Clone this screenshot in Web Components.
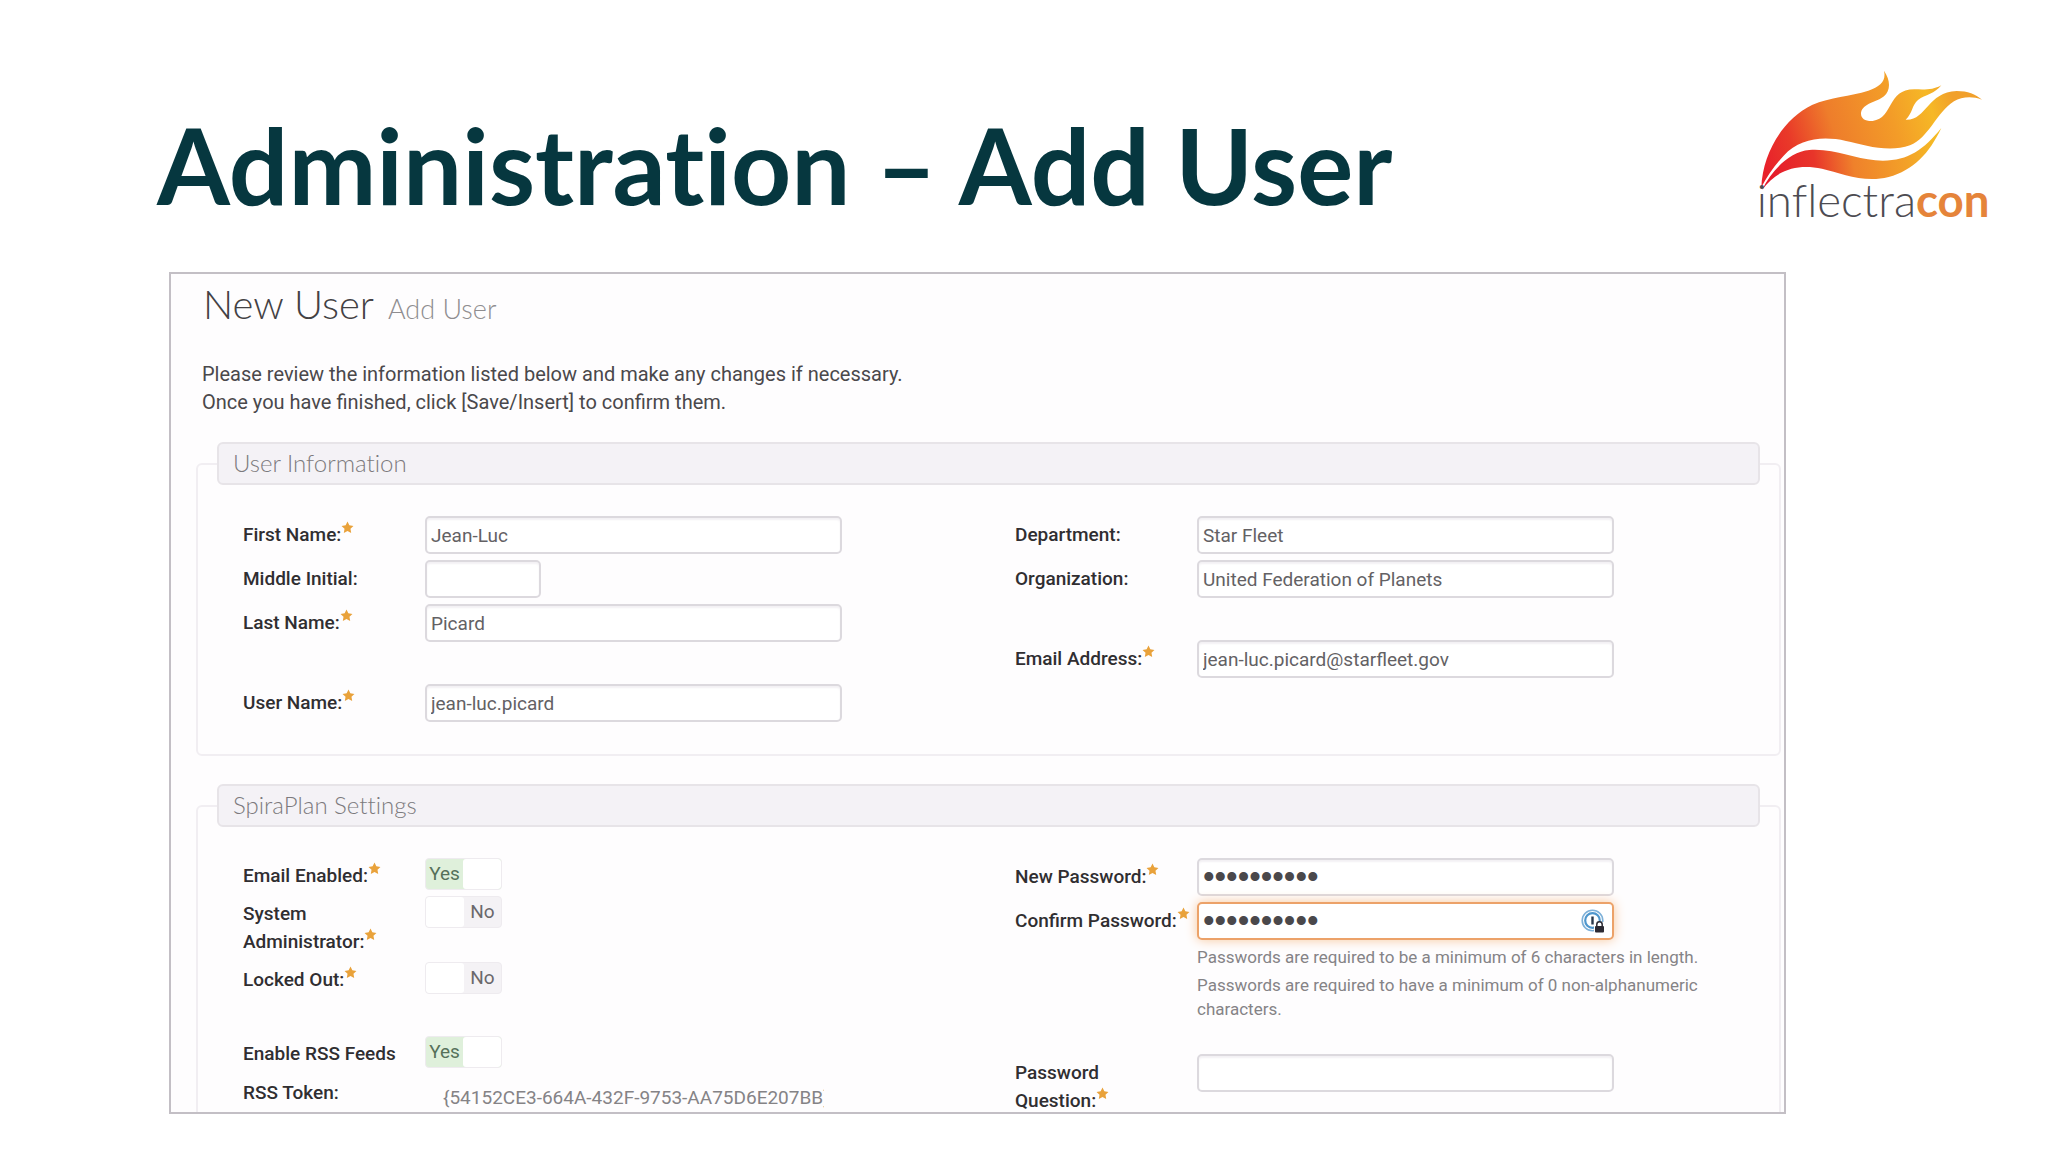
<!DOCTYPE html>
<html lang="en">
<head>
<meta charset="utf-8">
<title>Administration – Add User</title>
<style>
  html, body { margin: 0; height: 100%; background: #fff; }
  body { font-family: Roboto, "Liberation Sans", sans-serif; font-size: 19px; line-height: 28px; color: #4a484b; }
  [slot=help] p { margin: 4px 0 0; }
</style>
</head>
<body>
<training-slide>
  <h1 slot="title">Administration – Add User</h1>
  <brand-logo slot="logo"></brand-logo>
  <admin-panel heading="New User" subheading="Add User">
    <p slot="intro">Please review the information listed below and make any changes if necessary.<br>Once you have finished, click [Save/Insert] to confirm them.</p>
    <form-section legend="User Information">
      <form-column>
        <text-field label="First Name:" required value="Jean-Luc"></text-field>
        <text-field label="Middle Initial:" short></text-field>
        <text-field label="Last Name:" required value="Picard"></text-field>
        <text-field label="User Name:" required value="jean-luc.picard" spaced></text-field>
      </form-column>
      <form-column>
        <text-field label="Department:" value="Star Fleet"></text-field>
        <text-field label="Organization:" value="United Federation of Planets"></text-field>
        <text-field label="Email Address:" required type="email" value="jean-luc.picard@starfleet.gov" spaced></text-field>
      </form-column>
    </form-section>
    <form-section legend="SpiraPlan Settings">
      <form-column>
        <switch-field label="Email Enabled:" required on></switch-field>
        <switch-field label="System Administrator:" required></switch-field>
        <switch-field label="Locked Out:" required></switch-field>
        <switch-field label="Enable RSS Feeds" on spaced></switch-field>
        <text-field label="RSS Token:" plain value="{54152CE3-664A-432F-9753-AA75D6E207BB}"></text-field>
      </form-column>
      <form-column>
        <text-field label="New Password:" required type="password" value="enterprise"></text-field>
        <text-field label="Confirm Password:" required type="password" value="enterprise" active>
          <key-icon slot="icon"></key-icon>
          <div slot="help">
            <p>Passwords are required to be a minimum of 6 characters in length.</p>
            <p>Passwords are required to have a minimum of 0 non-alphanumeric characters.</p>
          </div>
        </text-field>
        <text-field label="Password Question:" required spaced="tight"></text-field>
      </form-column>
    </form-section>
  </admin-panel>
</training-slide>

<script>
const STAR = `<svg class="star" viewBox="0 0 24 24" aria-hidden="true"><path d="M12 1l3.4 6.900 7.600 1.100-5.500 5.400 1.300 7.600-6.800-3.600-6.800 3.600 1.300-7.600L1 9l7.600-1.100z" fill="#e9a23b"/></svg>`;

const FIELD_CSS = `
  :host { display: grid; grid-template-columns: 182px minmax(0, 1fr); align-items: start; }
  :host([spaced]) { margin-top: 36px; }
  :host([spaced=tight]) { margin-top: 27px; }
  .name { display: block; padding-top: 4px; font-weight: 500; color: #302e31; }
  .nobr { white-space: nowrap; }
  .star { width: 13px; height: 13px; vertical-align: top; }
`;

/* Keeps the marker on the same line as the last word of the label. */
function labelHtml(el) {
  const words = el.getAttribute('label').split(' ');
  const last = words.pop();
  const lead = words.length ? words.join(' ') + ' ' : '';
  return lead + `<span class="nobr">${last}${el.hasAttribute('required') ? STAR : ''}</span>`;
}

function define(name, render) {
  customElements.define(name, class extends HTMLElement {
    connectedCallback() {
      if (this.shadowRoot) return;
      this.attachShadow({ mode: 'open' }).innerHTML = render(this);
    }
  });
}

define('training-slide', () => `
  <style>
    :host { display: flex; flex-direction: column; box-sizing: border-box; height: 100vh; padding: 50px 38px 38px; }
    header { display: flex; justify-content: space-between; align-items: flex-start; height: 222px; flex: none; padding-left: 119px; }
    ::slotted(h1) { margin: 49px 0 0; font: 700 105px/130px Lato, sans-serif; font-variant-ligatures: none; color: #06373f; white-space: nowrap; }
    main { flex: 1; min-height: 0; display: flex; margin: 0 224px 0 131px; }
  </style>
  <header><slot name="title"></slot><slot name="logo"></slot></header>
  <main><slot></slot></main>`);

define('brand-logo', () => `
  <style>
    :host { display: block; flex: none; }
    svg { display: block; width: 270px; height: 190px; }
    text { font-family: Lato, sans-serif; font-size: 137px; font-weight: 300; font-variant-ligatures: none; fill: #4d4c52; }
    .con { font-weight: 700; fill: #e5843a; }
  </style>
  <svg viewBox="0 0 810 570" role="img" aria-label="inflectracon">
    <defs>
      <linearGradient id="f" gradientUnits="userSpaceOnUse" x1="70" y1="330" x2="640" y2="150">
        <stop offset="0" stop-color="#e8212b"/><stop offset=".16" stop-color="#e93a29"/>
        <stop offset=".38" stop-color="#ee7d2b"/><stop offset=".68" stop-color="#f39c28"/>
        <stop offset=".88" stop-color="#f6b826"/><stop offset="1" stop-color="#f1a02b"/>
      </linearGradient>
      <linearGradient id="g" gradientUnits="userSpaceOnUse" x1="80" y1="370" x2="600" y2="300">
        <stop offset="0" stop-color="#e5192b"/><stop offset=".28" stop-color="#e8352a"/>
        <stop offset=".5" stop-color="#ef812b"/><stop offset=".8" stop-color="#f3a128"/><stop offset="1" stop-color="#f5bd25"/>
      </linearGradient>
    </defs>
    <path fill="url(#f)" d="M64 412C68 310 128 208 216 165C272 140 330 140 385 122C422 110 439 92 432 62C452 92 452 120 432 139C410 158 370 158 363 188C362 207 376 214 398 213C462 204 440 118 523 118C555 119 580 120 604 106C585 131 556 134 534 150C516 164 518 190 497 209C560 212 562 126 650 123C684 123 706 132 726 149C694 137 665 141 642 154C590 186 566 265 510 286C446 309 372 285 318 273C250 258 180 264 131 317C104 347 82 378 64 412Z"/>
    <path fill="url(#g)" d="M66 420C97 358 150 305 208 300C286 295 340 326 406 331C496 338 546 305 604 234C568 310 520 361 446 381C370 400 304 369 246 356C176 341 112 356 66 420Z"/>
    <text x="50" y="500">inflectra<tspan class="con">con</tspan></text>
  </svg>`);

define('admin-panel', el => `
  <style>
    :host { display: block; flex: 1; min-width: 0; box-sizing: border-box; overflow: hidden; border: 2px solid #c3bfc5; background: #fefdfe; padding: 5px 3px 0 25px; }
    h2 { margin: 0 0 0 7px; font: 300 40px/50px Lato, sans-serif; color: #434144; }
    small { margin-left: 4px; font-size: 27px; color: #8f8d90; }
    .intro { margin: 26px 0 0 6px; }
    ::slotted(p) { margin: 0; font-size: 20px; }
    .body { display: flex; flex-direction: column; gap: 28px; margin-top: 26px; }
  </style>
  <h2>${el.getAttribute('heading')} <small>${el.getAttribute('subheading')}</small></h2>
  <div class="intro"><slot name="intro"></slot></div>
  <div class="body"><slot></slot></div>`);

define('form-section', el => `
  <style>
    :host { display: block; }
    fieldset { margin: 0; min-width: 0; border: 2px solid #f1eef2; border-radius: 6px; padding: 31px 19px 32px; }
    legend { box-sizing: border-box; width: 100%; height: 43px; padding: 0 14px; border: 2px solid #e7e4e8; border-radius: 6px; background: #f4f2f6; font: 300 24px/37px Lato, sans-serif; font-variant-ligatures: none; color: #7c7a7d; }
    .columns { display: grid; grid-template-columns: 1fr 1fr; column-gap: 8px; padding-left: 26px; margin-right: -19px; }
  </style>
  <fieldset>
    <legend>${el.getAttribute('legend')}</legend>
    <div class="columns"><slot></slot></div>
  </fieldset>`);

define('form-column', () => `
  <style>:host { display: flex; flex-direction: column; gap: 6px; min-width: 0; }</style>
  <slot></slot>`);

define('text-field', el => `
  <style>
    ${FIELD_CSS}
    .name { padding-top: 5px; }
    .box { position: relative; max-width: 417px; }
    input { display: block; box-sizing: border-box; width: 100%; height: 38px; margin: 0; padding: 0 4px; border: 2px solid #dcd9de; border-radius: 5px; background: #fff; font: inherit; color: #636164; outline: none; box-shadow: inset 0 2px 2px #f3f1f4; }
    input[type=password] { font-family: "Liberation Sans", sans-serif; font-size: 33px; color: #4a484b; }
    :host([short]) .box { max-width: 116px; }
    :host([active]) input { border-color: #eca269; box-shadow: 0 0 12px #f8c79c; }
    :host([plain]) .box { max-width: 401px; }
    :host([plain]) input { height: 46px; padding: 0 0 0 16px; border-color: transparent; background: none; box-shadow: none; color: #858386; }
    ::slotted([slot=icon]) { position: absolute; right: 9px; top: 7px; }
    .help { max-width: 520px; padding-top: 1px; font-size: 17px; line-height: 24px; color: #858386; }
  </style>
  <label class="name" for="field">${labelHtml(el)}</label>
  <div>
    <div class="box">
      <input id="field" type="${el.getAttribute('type') || 'text'}" value="${el.getAttribute('value') || ''}">
      <slot name="icon"></slot>
    </div>
    ${el.querySelector('[slot=help]') ? '<div class="help"><slot name="help"></slot></div>' : ''}
  </div>`);

define('switch-field', el => {
  const on = el.hasAttribute('on');
  const knob = `<input id="field" type="checkbox" role="switch"${on ? ' checked' : ''}>`;
  const text = `<span>${on ? 'Yes' : 'No'}</span>`;
  return `
  <style>
    ${FIELD_CSS}
    .switch { display: flex; box-sizing: border-box; width: 77px; height: 32px; border: 1px solid #eeebef; border-radius: 4px; overflow: hidden; background: #f4f2f5; color: #6a686b; }
    :host([on]) .switch { background: #dff0db; color: #56705a; }
    .switch span { flex: 1; line-height: 30px; text-align: center; }
    input { appearance: none; width: 38px; height: 30px; margin: 0; background: #fff; border-radius: 3px; }
  </style>
  <label class="name" for="field">${labelHtml(el)}</label>
  <label class="switch" for="field">${on ? text + knob : knob + text}</label>`;
});

define('key-icon', () => `
  <style>:host { display: block; } svg { display: block; width: 24px; height: 24px; }</style>
  <svg viewBox="0 0 24 24" aria-hidden="true">
    <circle cx="11.500" cy="11.500" r="10.300" fill="#fff" stroke="#7db0d8" stroke-width="1.600"/>
    <circle cx="11.500" cy="11.500" r="7.300" fill="#fff" stroke="#4f97cd" stroke-width="2.200"/>
    <path d="M11.500 7.500v8" stroke="#28374a" stroke-width="2.400"/>
    <path d="M13 13h11v11H13z" fill="#fff"/>
    <path d="M15.800 17v-1.500a2.700 2.700 0 0 1 5.400 0V17" fill="none" stroke="#2c2a33" stroke-width="1.500"/>
    <rect x="14" y="17" width="9" height="6.500" rx="1" fill="#2c2a33"/>
  </svg>`);
</script>
</body>
</html>
